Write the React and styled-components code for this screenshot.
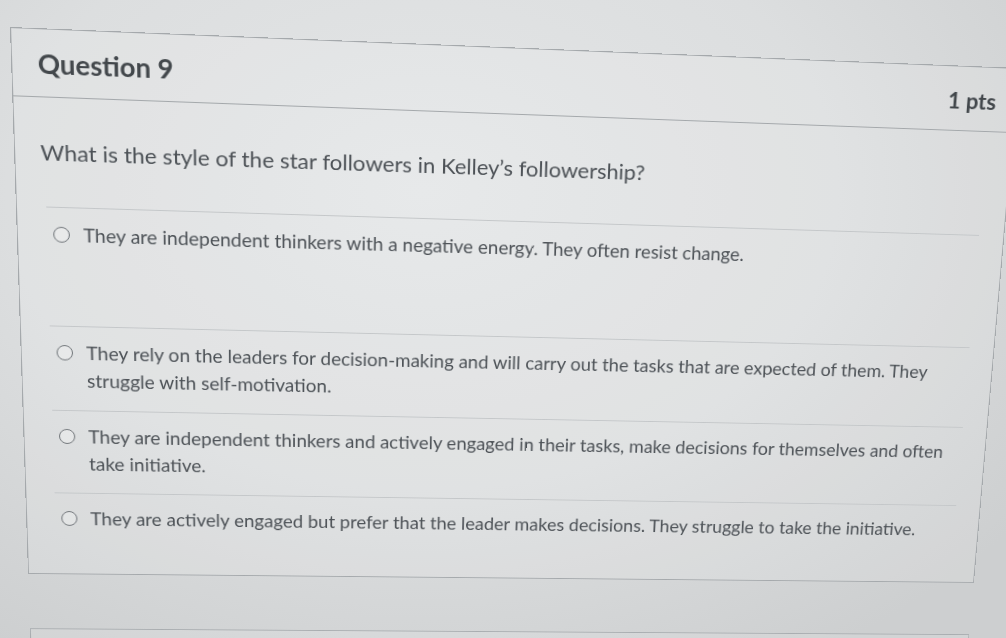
import React from "react";
import styled, { createGlobalStyle } from "styled-components";

// the screen was photographed at an angle: the flat quiz card is mapped onto
// the photo's corners with one homography (matrix3d)
const CAMERA =
    "matrix3d(1.0712, 0.045151, 0, 0.00006104, 0.035618, 1.046107, 0, 0.00012411, 0, 0, 1, 0, 10, 27, 0, 1)";

const answers = [
    { id: 1, text: "They are independent thinkers with a negative energy. They often resist change.", tall: true },
    {
        id: 2,
        text: "They rely on the leaders for decision-making and will carry out the tasks that are expected of them. They struggle with self-motivation.",
    },
    {
        id: 3,
        text: "They are independent thinkers and actively engaged in their tasks, make decisions for themselves and often take initiative.",
    },
    {
        id: 4,
        text: "They are actively engaged but prefer that the leader makes decisions. They struggle to take the initiative.",
    },
];

function App() {
    return (
        <>
            <GlobalStyle />
            <Scene>
                <Card>
                    <Header>
                        <Title>Question 9</Title>
                        <Points>1 pts</Points>
                    </Header>
                    <QuestionText>What is the style of the star followers in Kelley’s followership?</QuestionText>
                    <AnswerList>
                        {answers.map((a) => (
                            <Answer key={a.id} $tall={a.tall}>
                                <Radio />
                                <AnswerText>{a.text}</AnswerText>
                            </Answer>
                        ))}
                    </AnswerList>
                </Card>
                <NextCard />
            </Scene>
        </>
    );
}

const GlobalStyle = createGlobalStyle`
    html, body {
        margin: 0;
        height: 100%;
        overflow: hidden;
    }
    body {
        font-family: Lato, "Open Sans", sans-serif;
        background: radial-gradient(ellipse 75% 85% at 42% 30%, #e4e6e7 0%, #dcdedf 55%, #cdcfd0 100%);
    }
`;

const Scene = styled.div`
    width: 1000px;
    transform-origin: 0 0;
    transform: ${CAMERA};
`;

const Card = styled.div`
    box-sizing: border-box;
    height: 561px;
    border: 1px solid #a5a9ac;
    background: rgba(255, 255, 255, 0.12);
`;

const Header = styled.div`
    box-sizing: border-box;
    height: 66px;
    display: flex;
    justify-content: space-between;
    align-items: center;
    padding: 0 20px 0 24px;
    border-bottom: 1px solid #a4a8ab;
    color: #42474b;
`;

const Title = styled.h2`
    margin: 0;
    font-size: 26px;
    font-weight: 700;
`;

const Points = styled.div`
    font-size: 23px;
    font-weight: 700;
    padding-top: 3px;
`;

const QuestionText = styled.p`
    margin: 39px 0 0 24px;
    font-size: 22px;
    line-height: 30px;
    color: #4c5156;
`;

const AnswerList = styled.div`
    margin: 39px 26px 25px 28px;
`;

const Answer = styled.label`
    box-sizing: border-box;
    display: flex;
    align-items: flex-start;
    gap: 13px;
    padding: 12px 10px 17px 6px;
    min-height: ${(p) => (p.$tall ? "121px" : "auto")};
    border-top: 1px solid #c4c7c9;
`;

const Radio = styled.span`
    box-sizing: border-box;
    flex-shrink: 0;
    width: 16px;
    height: 16px;
    margin-top: 7px;
    border: 1.5px solid #6f7478;
    border-radius: 50%;
    background: rgba(255, 255, 255, 0.25);
`;

const AnswerText = styled.span`
    font-size: 19px;
    line-height: 29px;
    color: #4d5257;
`;

const NextCard = styled.div`
    height: 300px;
    margin-top: 60px;
    border: 1px solid #a9adb0;
    background: rgba(255, 255, 255, 0.1);
`;

export default App;
